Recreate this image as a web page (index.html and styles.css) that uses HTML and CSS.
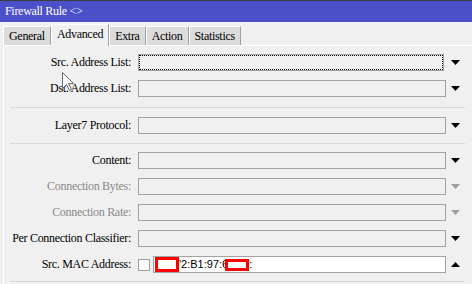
FILE: index.html
```html
<!DOCTYPE html>
<html>
<head>
<meta charset="utf-8">
<link rel="stylesheet" href="styles.css">
</head>
<body>
<div class="titlebar">Firewall Rule &lt;&gt;</div>
<div class="tabs">
  <div class="tab">General</div>
  <div class="tab active">Advanced</div>
  <div class="tab">Extra</div>
  <div class="tab">Action</div>
  <div class="tab">Statistics</div>
</div>
<div class="panel">
  <div class="row first">
    <div class="label">Src. Address List:</div>
    <div class="field focus"></div>
    <svg class="arrow" width="9" height="5" viewBox="0 0 9 5"><path d="M0 0H9L4.5 5Z"/></svg>
  </div>
  <div class="row">
    <div class="label">Dst. Address List:</div>
    <div class="field"></div>
    <svg class="arrow" width="9" height="5" viewBox="0 0 9 5"><path d="M0 0H9L4.5 5Z"/></svg>
  </div>
  <div class="sep sep-a"></div>
  <div class="row">
    <div class="label">Layer7 Protocol:</div>
    <div class="field"></div>
    <svg class="arrow" width="9" height="5" viewBox="0 0 9 5"><path d="M0 0H9L4.5 5Z"/></svg>
  </div>
  <div class="sep"></div>
  <div class="row after-sep">
    <div class="label">Content:</div>
    <div class="field"></div>
    <svg class="arrow" width="9" height="5" viewBox="0 0 9 5"><path d="M0 0H9L4.5 5Z"/></svg>
  </div>
  <div class="row disabled">
    <div class="label">Connection Bytes:</div>
    <div class="field"></div>
    <svg class="arrow" width="9" height="5" viewBox="0 0 9 5"><path d="M0 0H9L4.5 5Z"/></svg>
  </div>
  <div class="row disabled">
    <div class="label">Connection Rate:</div>
    <div class="field"></div>
    <svg class="arrow" width="9" height="5" viewBox="0 0 9 5"><path d="M0 0H9L4.5 5Z"/></svg>
  </div>
  <div class="row">
    <div class="label">Per Connection Classifier:</div>
    <div class="field"></div>
    <svg class="arrow" width="9" height="5" viewBox="0 0 9 5"><path d="M0 0H9L4.5 5Z"/></svg>
  </div>
  <div class="row">
    <div class="label">Src. MAC Address:</div>
    <div class="check"></div>
    <div class="field mac"><span class="redact r1"></span><span class="mactext">'2:B1:97:6</span><span class="redact r2"></span><span class="mactext">:</span></div>
    <svg class="arrow" width="9" height="5" viewBox="0 0 9 5"><path d="M0 5H9L4.5 0Z"/></svg>
  </div>
  <div class="sep after-row"></div>
</div>
<svg class="cursor" width="13" height="20" viewBox="0 0 13 20"><path d="M0.5 0.5V16.5L4.5 12.5L7.5 18.5L9.5 17.5L6.5 11.5H11.5Z"/></svg>
</body>
</html>
```
FILE: styles.css
```css
html, body {
  margin: 0;
  padding: 0;
}
body {
  width: 472px;
  height: 284px;
  overflow: hidden;
  background: #f0f0f0;
  font-family: "Liberation Serif", serif;
  font-size: 12px;
  letter-spacing: -0.3px;
  color: #000;
  position: relative;
}
.titlebar {
  height: 21px;
  line-height: 21px;
  border-top: 1px solid #3c3c3c;
  background: #4b50c9;
  color: #fff;
  padding-left: 5px;
}
.tabs {
  display: flex;
  align-items: flex-end;
  height: 23px;
  padding-left: 3px;
}
.tab {
  height: 18px;
  line-height: 19px;
  padding: 0 5px;
  background: #dcdcdc;
  border-top: 1px solid #fff;
  border-left: 1px solid #fff;
  border-right: 1px solid #a0a0a0;
  box-sizing: content-box;
}
.tab.active {
  height: 18px;
  padding: 0 5px 3px 5px;
  background: #f0f0f0;
  position: relative;
  z-index: 1;
  margin-bottom: -1px;
}
.panel {
  margin-left: 3px;
  border-top: 1px solid #fff;
  border-left: 1px solid #fff;
  display: flex;
  flex-direction: column;
  height: 238px;
}
.row {
  display: flex;
  align-items: center;
  height: 17px;
  margin-top: 9px;
  line-height: 17px;
}
.row.first {
  margin-top: 8px;
}
.row.after-sep {
  margin-top: 8px;
}
.label {
  width: 127px;
  text-align: right;
  white-space: nowrap;
  flex: none;
}
.field {
  margin-left: 7px;
  width: 308px;
  height: 17px;
  box-sizing: border-box;
  border: 1px solid #a3a3a3;
  background: #f0f0f0;
  flex: none;
}
.field.focus {
  outline: 1px dotted #000;
  outline-offset: -2px;
  width: 306px;
}
.arrow {
  margin-left: 5px;
  flex: none;
  fill: #000;
}
.field.focus + .arrow {
  margin-left: 7px;
}
.disabled .label {
  color: #8a8a8a;
}
.disabled .arrow {
  fill: #a0a0a0;
}
.sep {
  margin-left: 6px;
  width: 455px;
  height: 0;
  border-top: 1px solid #dadada;
  margin-top: 9px;
}
.sep.sep-a {
  margin-top: 10px;
}
.sep.after-row {
  margin-top: 8px;
}
.check {
  margin-left: 7px;
  width: 12px;
  height: 12px;
  box-sizing: border-box;
  border: 1px solid #a0a0a0;
  background: #fff;
  flex: none;
}
.field.mac {
  margin-left: 3px;
  width: 293px;
  background: #fff;
  display: flex;
  align-items: center;
  font-family: "Liberation Sans", sans-serif;
  font-size: 11px;
  letter-spacing: 0;
  line-height: 15px;
}
.redact {
  display: block;
  box-sizing: border-box;
  border: 3px solid #ff0000;
  background: #fff;
  flex: none;
}
.r1 {
  width: 24px;
  height: 15px;
  margin-left: 1px;
}
.r2 {
  width: 24px;
  height: 12px;
  margin-left: -3px;
}
.mactext {
  white-space: nowrap;
}
.cursor {
  position: absolute;
  left: 62px;
  top: 72px;
  fill: #fafafa;
  stroke: #6a6a6a;
  stroke-width: 1;
}
```
